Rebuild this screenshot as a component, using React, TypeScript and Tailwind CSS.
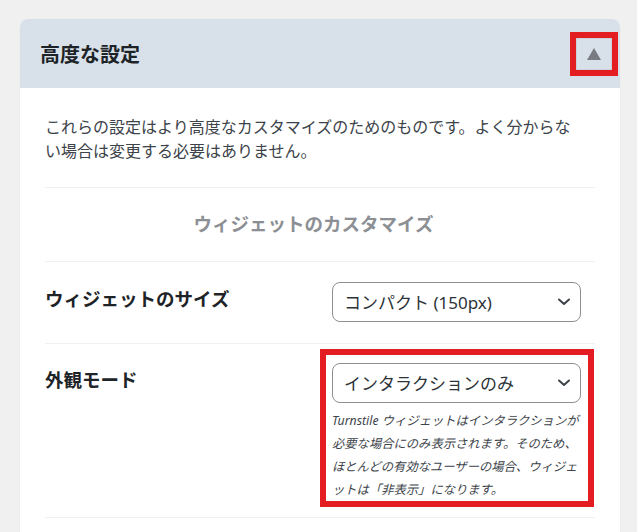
import React from 'react'

const font = "font-['Noto_Sans','Noto_Sans_CJK_JP',sans-serif]"

function Chevron() {
  return (
    <svg width="12" height="8" viewBox="0 0 12 8" className="shrink-0">
      <path d="M1 1.5 L6 6 L11 1.5" fill="none" stroke="#3c434a" strokeWidth="2" strokeLinecap="round" strokeLinejoin="round" />
    </svg>
  )
}

function SelectBox({ value }: { value: string }) {
  return (
    <div className="flex h-[40px] w-[249px] items-center justify-between rounded-[8px] border border-[#8c8f94] bg-white pl-[11px] pr-[10px]">
      <span className="text-[17px] leading-none text-[#2c3338]">{value}</span>
      <Chevron />
    </div>
  )
}

export default function App() {
  return (
    <div className={`min-h-screen bg-[#f0f0f1] pl-[20px] pt-[19px] ${font}`}>
      <div className="min-h-[513px] w-[600px] rounded-t-[8px] bg-white shadow-[0_1px_2px_rgba(0,0,0,0.06)]">
        {/* header */}
        <div className="flex h-[69px] items-center justify-between rounded-t-[8px] bg-[#d8e1ea] pl-[20px] pr-[8px]">
          <h2 className="pt-[2px] text-[20px] font-bold leading-none text-[#1d2327]">高度な設定</h2>
          <div className="relative">
            <button className="flex h-[32px] w-[36px] items-center justify-center border border-[#c9d2db] bg-[#d8e1ea]">
              <svg width="14" height="12" viewBox="0 0 14 12">
                <polygon points="7,0 14,12 0,12" fill="#787c82" />
              </svg>
            </button>
            <span className="pointer-events-none absolute -left-[6px] -top-[6px] h-[44px] w-[48px] border-[6px] border-[#e41d22]" />
          </div>
        </div>

        <div className="px-[25px]">
          <p className="pt-[27px] pb-[24px] text-[16px] leading-[24px] text-[#3c434a]">
            これらの設定はより高度なカスタマイズのためのものです。よく分からな
            <br />
            い場合は変更する必要はありません。
          </p>

          <div className="flex h-[75px] items-center justify-center border-y border-[#f0f0f1] pr-[13px]">
            <h3 className="text-[18.5px] font-bold leading-none text-[#8c8f94]">ウィジェットのカスタマイズ</h3>
          </div>

          <div className="grid grid-cols-[287px_249px] border-b border-[#f0f0f1] pt-[20px] pb-[21px]">
            <div className="pt-[5px] text-[18.5px] font-bold leading-[24px] text-[#1d2327]">ウィジェットのサイズ</div>
            <SelectBox value="コンパクト (150px)" />
          </div>

          <div className="grid grid-cols-[287px_249px] border-b border-[#f0f0f1] pt-[19px] pb-[16px]">
            <div className="pt-[5px] text-[18.5px] font-bold leading-[24px] text-[#1d2327]">外観モード</div>
            <div className="relative">
              <SelectBox value="インタラクションのみ" />
              <p className="mt-[6px] whitespace-nowrap text-[12.3px] italic leading-[23px] text-[#3c434a]">
                Turnstile ウィジェットはインタラクションが
                <br />
                必要な場合にのみ表示されます。そのため、
                <br />
                ほとんどの有効なユーザーの場合、ウィジェ
                <br />
                ットは「非表示」になります。
              </p>
              <span className="pointer-events-none absolute -left-[12px] -top-[14px] h-[158px] w-[274px] border-[6px] border-[#e41d22]" />
            </div>
          </div>
        </div>
      </div>
    </div>
  )
}
